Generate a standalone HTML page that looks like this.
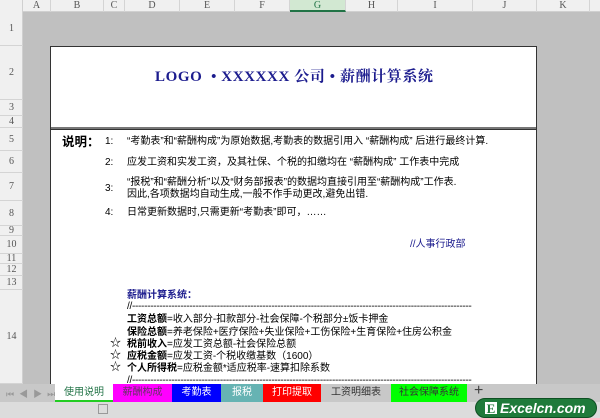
<!DOCTYPE html>
<html><head><meta charset="utf-8"><style>
*{margin:0;padding:0;box-sizing:border-box}
body{width:600px;height:418px;overflow:hidden;background:#c0c0c0;font-family:"Liberation Sans","Noto Sans CJK SC",sans-serif;position:relative;font-size:10px;color:#000}
.a{position:absolute;white-space:nowrap}
.ch{position:absolute;top:0;height:12px;font-family:"Liberation Serif","Noto Serif CJK SC",serif;font-size:10px;color:#555;text-align:center;line-height:12px;border-right:1px solid #d4d4d4}
.rh{position:absolute;left:0;width:23px;font-size:10px;color:#555;text-align:center;border-bottom:1px solid #d4d4d4;font-family:"Liberation Serif",serif;display:flex;align-items:center;justify-content:center}
.t{line-height:12px}
.b{font-weight:bold}
.tab{position:absolute;top:384px;height:18px;line-height:18px;text-align:center;font-size:10px}
.d{left:127px;width:345px;overflow:hidden;letter-spacing:-0.3px}
.s{left:110px;font-size:11px;line-height:12px}
</style></head><body>
<div class="a" style="left:0;top:0;width:600px;height:12px;background:#f0f0f0;border-bottom:1px solid #d0d0d0"></div>
<div class="a" style="left:0;top:0;width:23px;height:384px;background:#f0f0f0;border-right:1px solid #d0d0d0"></div>
<div class="ch" style="left:23px;width:28px">A</div>
<div class="ch" style="left:51px;width:53px">B</div>
<div class="ch" style="left:104px;width:21px">C</div>
<div class="ch" style="left:125px;width:55px">D</div>
<div class="ch" style="left:180px;width:55px">E</div>
<div class="ch" style="left:235px;width:55px">F</div>
<div class="ch" style="left:290px;width:56px;background:#d2e8d2;color:#217346;border-bottom:2px solid #217346">G</div>
<div class="ch" style="left:346px;width:52px">H</div>
<div class="ch" style="left:398px;width:75px">I</div>
<div class="ch" style="left:473px;width:64px">J</div>
<div class="ch" style="left:537px;width:53px">K</div>
<div class="rh" style="top:12px;height:34px">1</div>
<div class="rh" style="top:46px;height:54px">2</div>
<div class="rh" style="top:100px;height:16px">3</div>
<div class="rh" style="top:116px;height:12px">4</div>
<div class="rh" style="top:128px;height:23px">5</div>
<div class="rh" style="top:151px;height:22px">6</div>
<div class="rh" style="top:173px;height:28px">7</div>
<div class="rh" style="top:201px;height:25px">8</div>
<div class="rh" style="top:226px;height:10px">9</div>
<div class="rh" style="top:236px;height:18px">10</div>
<div class="rh" style="top:254px;height:10px">11</div>
<div class="rh" style="top:264px;height:12px">12</div>
<div class="rh" style="top:276px;height:14px">13</div>
<div class="rh" style="top:290px;height:94px">14</div>

<div class="a" style="left:50px;top:46px;width:487px;height:338px;background:#fff;border:1px solid #333;border-bottom:none"></div>
<div class="a" style="left:51px;top:127px;width:485px;height:3px;border-top:2px solid #777;border-bottom:1px solid #333"></div>

<div class="a b" style="left:155px;top:65px;font-size:15px;color:#1c1c8e;font-family:'Liberation Serif','Noto Serif CJK SC',serif;letter-spacing:0.6px">LOGO &nbsp;• XXXXXX 公司 • 薪酬计算系统</div>

<div class="a b t" style="left:62px;top:135px;font-size:12.5px;line-height:14px">说明：</div>
<div class="a t" style="left:105px;top:136px">1:</div>
<div class="a t" style="left:127px;top:136px">“考勤表”和“薪酬构成”为原始数据,考勤表的数据引用入 “薪酬构成” 后进行最终计算.</div>
<div class="a t" style="left:105px;top:157px">2:</div>
<div class="a t" style="left:127px;top:157px">应发工资和实发工资，及其社保、个税的扣缴均在 “薪酬构成” 工作表中完成</div>
<div class="a t" style="left:105px;top:183px">3:</div>
<div class="a t" style="left:127px;top:177px">“报税”和“薪酬分析”以及“财务部报表”的数据均直接引用至“薪酬构成”工作表.</div>
<div class="a t" style="left:127px;top:189px">因此,各项数据均自动生成,一般不作手动更改,避免出错.</div>
<div class="a t" style="left:105px;top:207px">4:</div>
<div class="a t" style="left:127px;top:207px">日常更新数据时,只需更新“考勤表”即可，……</div>
<div class="a t" style="left:410px;top:239px;color:#1c1c8e">//人事行政部</div>

<div class="a t b" style="left:127px;top:290px;color:#1c1c8e">薪酬计算系统：</div>
<div class="a t d" style="top:301px">//------------------------------------------------------------------------------------------------------------------------------------</div>
<div class="a t" style="left:127px;top:314px"><b>工资总额</b>=收入部分-扣款部分-社会保障-个税部分±饭卡押金</div>
<div class="a t" style="left:127px;top:327px"><b>保险总额</b>=养老保险+医疗保险+失业保险+工伤保险+生育保险+住房公积金</div>
<div class="a s" style="top:337px">☆</div>
<div class="a t" style="left:127px;top:339px"><b>税前收入</b>=应发工资总额-社会保险总额</div>
<div class="a s" style="top:349px">☆</div>
<div class="a t" style="left:127px;top:351px"><b>应税金额</b>=应发工资-个税收缴基数（1600）</div>
<div class="a s" style="top:361px">☆</div>
<div class="a t" style="left:127px;top:363px"><b>个人所得税</b>=应税金额*适应税率-速算扣除系数</div>
<div class="a t d" style="top:375px;height:9px">//------------------------------------------------------------------------------------------------------------------------------------</div>

<div class="a" style="left:0;top:384px;width:600px;height:18px;background:#c8c8c8"></div>
<div class="a" style="left:6px;top:387px;color:#999;font-size:9px;letter-spacing:5px">⏮◀▶⏭</div>
<div class="tab" style="left:55px;width:58px;background:#fff;color:#217346;border-bottom:2px solid #2c2">使用说明</div>
<div class="tab" style="left:113px;width:59px;background:#f0f;color:#663366">薪酬构成</div>
<div class="tab" style="left:172px;width:49px;background:#00f;color:#fff">考勤表</div>
<div class="tab" style="left:221px;width:42px;background:#66b3b3;color:#fff">报税</div>
<div class="tab" style="left:263px;width:58px;background:#f00;color:#fff">打印提取</div>
<div class="tab" style="left:321px;width:70px;background:#c8c8c8;color:#333">工资明细表</div>
<div class="tab" style="left:391px;width:76px;background:#0f0;color:#333">社会保障系统</div>
<div class="a" style="left:474px;top:382px;font-size:16px;color:#444">+</div>
<div class="a" style="left:0;top:402px;width:600px;height:16px;background:#dcdcdc"></div>
<div class="a" style="left:98px;top:404px;width:10px;height:10px;border:1px solid #999"></div>
<div class="a" style="left:475px;top:398px;width:122px;height:20px;background:#1f7a3a;border-radius:10px;border:1px solid #0d4f22"></div>
<div class="a" style="left:484px;top:401px;width:14px;height:14px;background:#fff;border:1px solid #1f7a3a;color:#1f7a3a;font-weight:bold;font-family:'Liberation Serif',serif;font-size:13px;line-height:13px;text-align:center">E</div>
<div class="a" style="left:500px;top:399px;color:#fff;font-weight:bold;font-style:italic;font-size:14px;line-height:18px">Excelcn.com</div>
</body></html>
